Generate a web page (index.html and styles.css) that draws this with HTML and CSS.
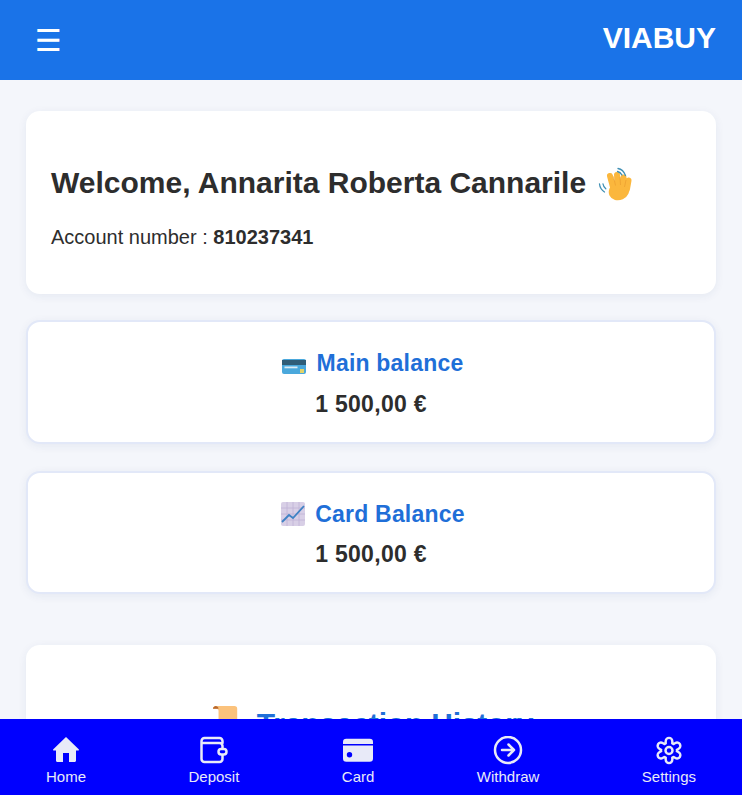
FILE: index.html
```html
<!DOCTYPE html>
<html lang="en">
<head>
<meta charset="utf-8">
<title>VIABUY</title>
<link rel="stylesheet" href="styles.css">
</head>
<body>
<header class="topbar">
  <span class="menu-btn">☰</span>
  <span class="brand">VIABUY</span>
</header>
<main class="content">
  <section class="card welcome">
    <h1 class="welcome-title">Welcome, Annarita Roberta Cannarile
      <svg class="emoji-wave" viewBox="0 0 36 36" aria-hidden="true">
        <ellipse cx="21" cy="26" rx="10.500" ry="9" transform="rotate(-25 21 26)" fill="#fbb73d"/>
        <path d="M15.500 24 12 11M20 22 19 10M25 22 25.500 12.500M29 24 30.500 15.500" fill="none" stroke="#fbb73d" stroke-width="6" stroke-linecap="round"/>
        <path d="M15.500 11.500l2 9M22 12l.5 8M28 15l-1.500 7" fill="none" stroke="#e8982c" stroke-width=".6"/>
        <path d="M20 3.500c3 .5 6 3 7.500 7M19.500 6.500c2 .5 3.500 1.700 4.500 3.500M1.500 19c.3 3 2 6 5 8M5 19c.3 1.800 1.200 3.500 2.800 4.800" fill="none" stroke="#3f8fb4" stroke-width="1.300" stroke-linecap="round"/>
      </svg>
    </h1>
    <p class="account">Account number : <strong>810237341</strong></p>
  </section>
  <section class="card balance">
    <h2 class="balance-title">
      <svg class="emoji" viewBox="0 0 26 26" aria-hidden="true">
        <rect x="1" y="9" width="24" height="15" rx="2" fill="#4aa8dc"/>
        <rect x="1" y="10" width="24" height="5" fill="#2f5d78"/>
        <rect x="3.500" y="16.500" width="13" height="1.800" fill="#dcecf5"/>
        <rect x="19" y="19" width="4" height="4" fill="#e2d36a"/>
      </svg>
      Main balance
    </h2>
    <p class="amount">1 500,00 €</p>
  </section>
  <section class="card balance">
    <h2 class="balance-title">
      <svg class="emoji" viewBox="-1 0 26 26" aria-hidden="true">
        <rect x="1" y="1" width="24" height="24" rx="2" fill="#d8cfe6"/>
        <path d="M1 7h24M1 13h24M1 19h24M7 1v24M13 1v24M19 1v24" stroke="#c0b3d6" stroke-width=".8"/>
        <path d="M2 21l7-7 4 3 11-12" fill="none" stroke="#3f82c4" stroke-width="1.800"/>
      </svg>
      Card Balance
    </h2>
    <p class="amount">1 500,00 €</p>
  </section>
  <section class="card history">
    <h2 class="history-title">
      <svg class="emoji-scroll" viewBox="0 0 30 30" aria-hidden="true">
        <path d="M1 3c0-2 2-3 3-3h20c2 0 3 1 3 3v27H7V5C7 3 5 3 1 3z" fill="#fbc27c"/>
        <path d="M1 3c0-2 2-3 3-3s3 1 3 3z" fill="#b9692f"/>
      </svg>
      Transaction History
    </h2>
  </section>
</main>
<nav class="bottom-nav">
  <a class="nav-item">
    <svg class="nav-icon" viewBox="0 0 30 30" aria-hidden="true"><path class="solid" d="M15 1 2.300 13.200c-.6.600-.2 1.300.5 1.300H5v10c0 .8.600 1.500 1.500 1.500H12v-9h6v9h5.500c.9 0 1.500-.7 1.500-1.500v-10h2.200c.7 0 1.100-.7.500-1.300z"/></svg>
    <span>Home</span>
  </a>
  <a class="nav-item">
    <svg class="nav-icon" viewBox="0 0 30 30" aria-hidden="true"><path class="line" d="M23.500 12.500V10a3 3 0 0 0-3-3H2.500M23.500 7V5A3 3 0 0 0 20.500 2H5.500a3 3 0 0 0-3 3v18a3 3 0 0 0 3 3h15a3 3 0 0 0 3-3v-3.500"/><rect class="line" x="19.500" y="13" width="8" height="5.500" rx="2.700"/></svg>
    <span>Deposit</span>
  </a>
  <a class="nav-item">
    <svg class="nav-icon" viewBox="0 0 30 30" aria-hidden="true"><path class="solid" fill-rule="evenodd" d="M0 6a3.300 3.300 0 0 1 3.300-3.300h23.400A3.300 3.300 0 0 1 30 6v2H0zM0 9.600h30v12.800a3.300 3.300 0 0 1-3.300 3.300H3.300A3.300 3.300 0 0 1 0 22.400zM6.500 16a2.700 2.700 0 1 0 0 5.400 2.700 2.700 0 0 0 0-5.400z"/></svg>
    <span>Card</span>
  </a>
  <a class="nav-item">
    <svg class="nav-icon" viewBox="0 0 30 30" aria-hidden="true"><circle class="line" cx="15" cy="14" r="13"/><path class="line" d="M9 14h12M15.500 8.500 21 14l-5.500 5.500"/></svg>
    <span>Withdraw</span>
  </a>
  <a class="nav-item">
    <svg class="nav-icon" viewBox="0 0 30 30" aria-hidden="true">
      <circle class="gear-out" cx="15" cy="14.500" r="9.200"/>
      <path class="gear-spokes-out" d="M15 5.200V23.800M6.950 9.850 23.050 19.150M6.950 19.150 23.050 9.850"/>
      <circle class="gear-in" cx="15" cy="14.500" r="6.800"/>
      <path class="gear-spokes-in" d="M15 5.200V23.800M6.950 9.850 23.050 19.150M6.950 19.150 23.050 9.850"/>
      <circle class="line" cx="15" cy="14.500" r="3.500"/>
    </svg>
    <span>Settings</span>
  </a>
</nav>
</body>
</html>
```

FILE: styles.css
```css
* { box-sizing: border-box; }
html, body { margin: 0; padding: 0; }
body {
  background: #f4f6fb;
  font-family: "Liberation Sans", Arial, sans-serif;
  color: #2d2d2d;
  height: 795px;
  overflow: hidden;
}
.topbar {
  height: 80px;
  background: #1a73e8;
  color: #fff;
  display: flex;
  justify-content: space-between;
  align-items: flex-start;
  padding: 0 26px 0 35px;
}
.menu-btn { font-size: 30px; line-height: 82px; font-family: "DejaVu Sans", sans-serif; }
.brand { font-size: 30px; font-weight: 700; line-height: 76px; }
.content {
  padding: 31px 26px 0;
  display: flex;
  flex-direction: column;
}
.card {
  background: #fff;
  border-radius: 14px;
  box-shadow: 0 2px 10px rgba(30, 50, 120, 0.07);
}
.welcome {
  height: 183px;
  padding: 53px 25px 0;
  margin-bottom: 26px;
}
.welcome-title {
  margin: 0;
  font-size: 30px;
  line-height: 38px;
  font-weight: 700;
  display: flex;
  align-items: center;
  gap: 12px;
}
.emoji-wave { width: 36px; height: 36px; }
.account { margin: 22px 0 0; font-size: 20px; line-height: 26px; }
.balance {
  border: 2px solid #e2e8f8;
  height: 124px;
  margin-bottom: 27px;
  text-align: center;
  padding-top: 26px;
}
.balance + .balance { height: 123px; }
.balance-title {
  margin: 0;
  padding-left: 2px;
  color: #1f6fd8;
  font-size: 23px;
  line-height: 30px;
  font-weight: 700;
  letter-spacing: 0.2px;
  display: flex;
  justify-content: center;
  align-items: center;
  gap: 10px;
}
.emoji { width: 26px; height: 26px; }
.amount { margin: 11px 0 0; font-size: 23px; line-height: 30px; font-weight: 700; letter-spacing: 0.3px; }
.balance + .balance .amount { margin-top: 10px; }
.history {
  margin-top: 24px;
  height: 150px;
  padding: 60px 0 0 3px;
}
.history-title {
  margin: 0;
  color: #1f6fd8;
  font-size: 30px;
  line-height: 38px;
  font-weight: 700;
  letter-spacing: -0.2px;
  display: flex;
  justify-content: center;
  align-items: center;
  gap: 17px;
}
.emoji-scroll { width: 28px; height: 30px; margin-bottom: 8px; }
.bottom-nav {
  position: fixed;
  left: 0; right: 0; bottom: 0;
  height: 76px;
  background: #0000ff;
  display: flex;
  justify-content: space-between;
  align-items: flex-start;
  padding: 17px 46px 0;
}
.nav-item {
  display: flex;
  flex-direction: column;
  align-items: center;
  color: #e8eaf8;
  font-size: 15px;
  line-height: 18px;
  gap: 2px;
}
.nav-icon { width: 30px; height: 30px; display: block; }
.solid { fill: #e8eaf8; }
.line { fill: none; stroke: #e8eaf8; stroke-width: 2.500; stroke-linecap: round; stroke-linejoin: round; }
.gear-out { fill: #e8eaf8; }
.gear-in { fill: #0000ff; }
.gear-spokes-out { fill: none; stroke: #e8eaf8; stroke-width: 9; stroke-linecap: round; }
.gear-spokes-in { fill: none; stroke: #0000ff; stroke-width: 4.200; stroke-linecap: round; }
```
